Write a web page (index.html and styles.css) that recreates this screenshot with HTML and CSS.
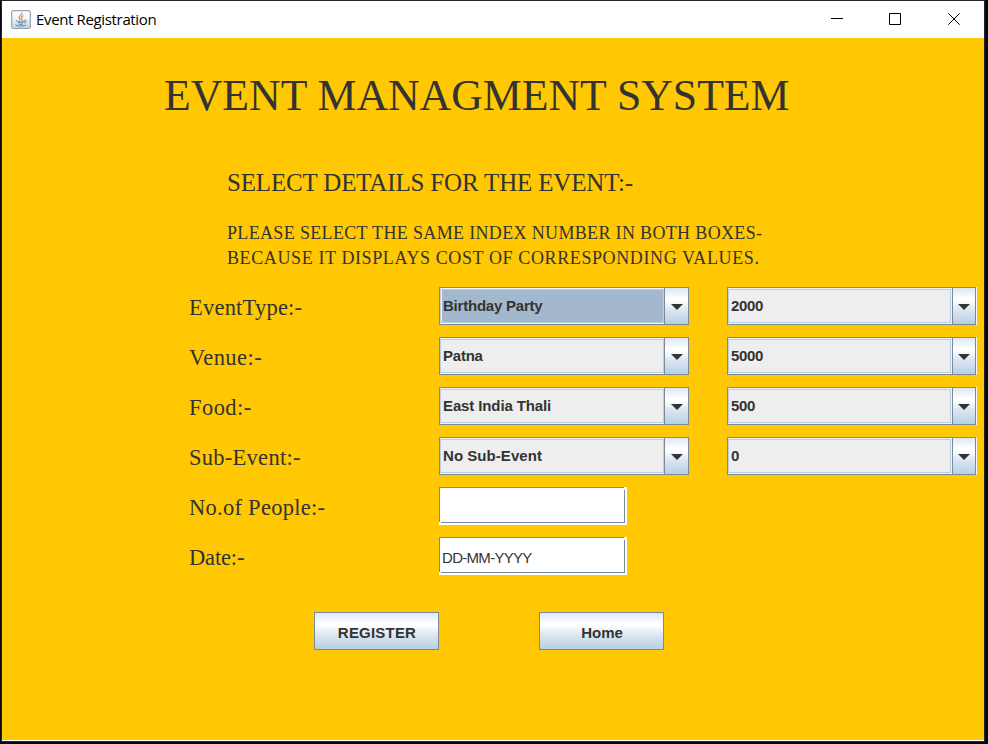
FILE: index.html
```html
<!DOCTYPE html>
<html lang="en">
<head>
<meta charset="utf-8">
<title>Event Registration</title>
<link rel="stylesheet" href="styles.css">
</head>
<body>
<div class="window">
  <header class="titlebar">
    <svg class="app-icon" width="20" height="20" viewBox="0 0 20 20">
      <defs><linearGradient id="g" x1="0" y1="0" x2="0" y2="1"><stop offset="0" stop-color="#fff"/><stop offset=".5" stop-color="#f0f3f6"/><stop offset="1" stop-color="#c3d0dc"/></linearGradient></defs>
      <rect x=".7" y=".7" width="18.6" height="17.8" rx="1.8" fill="url(#g)" stroke="#8fa3b5" stroke-width="1.2"/>
      <path d="M10.7 2.8c1 2-3.2 3-2.6 5 .2.7 1 1.2 1.3 2M12.4 5.6c-2 .7-2.4 1.6-1.6 2.5.5.6.2 1.1-.3 1.6" fill="none" stroke="#ee8a3c" stroke-width="1.3"/>
      <path d="M6 10.4c-1.300.3-1 .8 3.500.8s4.500-.4 4.500-.4M6.800 12.300c1.700.8 4.200.7 5.800.1M7.300 14c1.300.6 3.500.6 4.700 0M13.500 10.300c2.500-.5 2.200 2.200-.4 2.700M4.800 14.600c-1.800 1.400 9 2.200 10.300.2" fill="none" stroke="#5983a7" stroke-width="1"/>
    </svg>
    <span class="caption">Event Registration</span>
    <div class="controls">
      <svg width="12" height="12" viewBox="0 0 12 12"><path d="M0 5.500h12"/></svg>
      <svg width="12" height="12" viewBox="0 0 12 12"><path d="M.5.5h11v11H.5z"/></svg>
      <svg class="close" width="12" height="12" viewBox="0 0 12 12"><path d="M.3.3l11.400 11.400M11.700.3L.3 11.700"/></svg>
    </div>
  </header>
  <main class="content">
    <h1>EVENT MANAGMENT SYSTEM</h1>
    <h2>SELECT DETAILS FOR THE EVENT:-</h2>
    <p class="note first">PLEASE SELECT THE SAME INDEX NUMBER IN BOTH BOXES-</p>
    <p class="note second">BECAUSE IT DISPLAYS COST OF CORRESPONDING VALUES.</p>
    <div class="form">
      <label class="l1">EventType:-</label>
      <div class="combo focused"><span class="value">Birthday Party</span><span class="arrow"><svg width="12" height="6" viewBox="0 0 12 6"><path d="M0 0h12L6 6z"/></svg></span></div>
      <div class="combo cost"><span class="value">2000</span><span class="arrow"><svg width="12" height="6" viewBox="0 0 12 6"><path d="M0 0h12L6 6z"/></svg></span></div>
      <label class="l2">Venue:-</label>
      <div class="combo"><span class="value">Patna</span><span class="arrow"><svg width="12" height="6" viewBox="0 0 12 6"><path d="M0 0h12L6 6z"/></svg></span></div>
      <div class="combo cost"><span class="value">5000</span><span class="arrow"><svg width="12" height="6" viewBox="0 0 12 6"><path d="M0 0h12L6 6z"/></svg></span></div>
      <label class="l3">Food:-</label>
      <div class="combo thali"><span class="value">East India Thali</span><span class="arrow"><svg width="12" height="6" viewBox="0 0 12 6"><path d="M0 0h12L6 6z"/></svg></span></div>
      <div class="combo cost"><span class="value">500</span><span class="arrow"><svg width="12" height="6" viewBox="0 0 12 6"><path d="M0 0h12L6 6z"/></svg></span></div>
      <label class="l4">Sub-Event:-</label>
      <div class="combo sub"><span class="value">No Sub-Event</span><span class="arrow"><svg width="12" height="6" viewBox="0 0 12 6"><path d="M0 0h12L6 6z"/></svg></span></div>
      <div class="combo cost"><span class="value">0</span><span class="arrow"><svg width="12" height="6" viewBox="0 0 12 6"><path d="M0 0h12L6 6z"/></svg></span></div>
      <label class="l5">No.of People:-</label>
      <div class="field"><div class="field-inner"></div></div><i></i>
      <label class="l6">Date:-</label>
      <div class="field"><div class="field-inner">DD-MM-YYYY</div></div><i></i>
    </div>
    <div class="actions">
      <button class="register">REGISTER</button>
      <button class="home">Home</button>
    </div>
  </main>
</div>
</body>
</html>
```
FILE: styles.css
```css
* { box-sizing: border-box; }
body { margin: 0; width: 988px; height: 744px; padding: 1px 0 0 2px; overflow: hidden; background: #07080d; }
.window { width: 982px; height: 740px; display: flex; flex-direction: column; background: #fff; box-shadow: 0 0 0 1px #26262a; }
.titlebar { height: 37px; flex: none; display: flex; align-items: center; padding-left: 9px; }
.app-icon { flex: none; }
.caption { margin: -2px 0 0 5px; font: 15px/20px "Open Sans", sans-serif; letter-spacing: -.35px; color: #000; white-space: nowrap; }
.controls { margin: -1px 24px 0 auto; display: flex; gap: 46px; }
.controls svg { display: block; fill: none; stroke: #000; stroke-width: 1; }
.controls .close { margin-left: 1px; }
.content { height: 702px; flex: none; background: #ffc803; color: #333; font-family: "Liberation Serif", serif; white-space: nowrap; }
h1, h2, .note { margin: 0; font-weight: 400; }
h1 { padding: 31px 0 0 162px; font-size: 43.750px; line-height: 52px; height: 84px; }
h2 { margin: 47px 0 0 225px; font-size: 25px; line-height: 28px; letter-spacing: -.17px; }
.note { margin-left: 225px; font-size: 18px; line-height: 25px; }
.first { margin-top: 24px; letter-spacing: .34px; }
.second { letter-spacing: .61px; }
.form { display: grid; grid-template-columns: 250px 250px 250px; grid-auto-rows: 38px; row-gap: 12px; margin: 16px 0 0 187px; }
.form label { font-size: 22.500px; line-height: 42px; letter-spacing: .27px; }
.form .l1 { letter-spacing: .22px; }
.form .l2, .form .l3 { letter-spacing: .45px; }
.form .l6 { letter-spacing: -.15px; }
.combo { width: 250px; height: 38px; border: 1px solid #7a8a99; display: flex; background: #f1f5f9; font: bold 15px/17px "Liberation Sans", sans-serif; letter-spacing: -.22px; }
.thali { letter-spacing: -.12px; }
.sub { letter-spacing: .05px; }
.cost { margin-left: 38px; width: 249px; box-shadow: 1px 0 #f4f5f6; letter-spacing: -.35px; }
.value { flex: 1; border: 1px solid #b8cfe5; background: #eee; margin: 1px 0; padding: 7px 0 0 2px; }
.cost .value { margin-right: 1px; }
.focused .value { background: #a3b8cc; box-shadow: inset 1px 0 #f1f5f9; }
.arrow { width: 24px; border-left: 1px solid #7a8a99; background: linear-gradient(#dde8f3, #fff 30%, #fff 35%, #dce7f2 60%, #b8cfe5); display: flex; align-items: center; justify-content: center; padding-top: 2px; }
.cost .arrow { width: 23px; }
.arrow svg { display: block; fill: #333; }
.field { position: relative; width: 188px; height: 38px; background: #fff; font: 15px/17px "Liberation Sans", sans-serif; letter-spacing: -.7px; padding: 0 2px 2px 0; }
.field::before, .field::after { content: ""; position: absolute; background: #fff; }
.field::before { top: 0; right: 0; width: 3px; height: 3px; }
.field::after { left: 0; bottom: 0; width: 2px; height: 3px; }
.field-inner { height: 36px; border: 1px solid #7a8a99; padding: 11px 0 0 2px; }
.actions { display: flex; gap: 100px; margin: 37px 0 0 312px; }
button { width: 125px; height: 38px; padding: 3px 0 0 1px; border: 1px solid #7a8a99; border-radius: 0; color: #333; background: linear-gradient(#dde8f3, #fff 30%, #fff 35%, #dce7f2 60%, #b8cfe5); font: bold 15px/17px "Liberation Sans", sans-serif; }
.register { letter-spacing: .2px; }
```
